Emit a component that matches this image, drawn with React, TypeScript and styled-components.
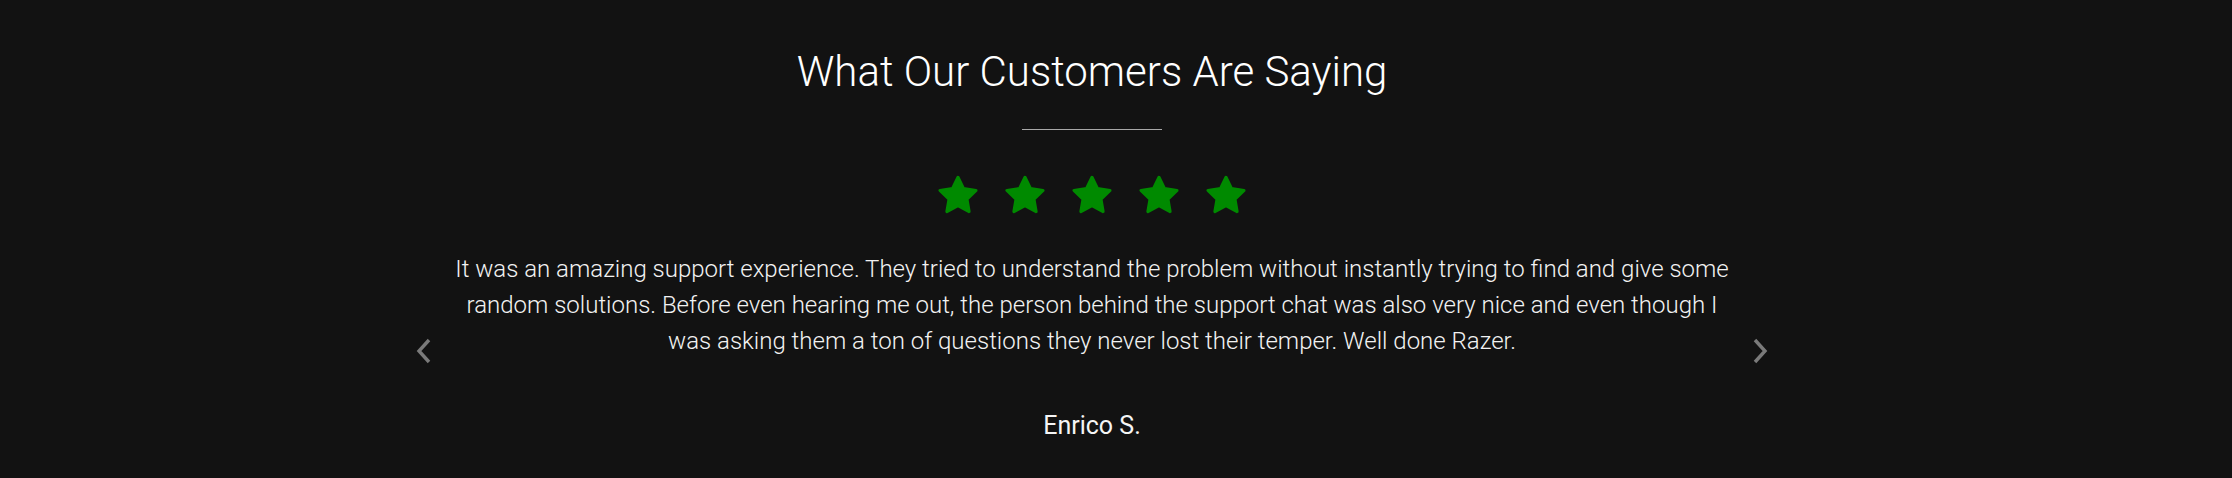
import React from "react";
import styled, { createGlobalStyle } from "styled-components";

const GlobalStyle = createGlobalStyle`
  html, body {
    margin: 0;
    padding: 0;
    background: #121212;
  }
  body {
    font-family: Roboto, "Noto Sans", sans-serif;
    color: #f2f2f2;
  }
`;

const Section = styled.section`
  display: flex;
  flex-direction: column;
  align-items: center;
  height: 478px;
  padding: 46px 48px 0 0;
  box-sizing: border-box;
`;

const Title = styled.h2`
  margin: 0;
  font-size: 42px;
  font-weight: 300;
  line-height: 52px;
  color: #ffffff;
`;

const Divider = styled.hr`
  width: 140px;
  height: 1px;
  margin: 31px 0 0;
  border: 0;
  background: #a8a8a8;
`;

const Stars = styled.div`
  display: flex;
  gap: 21px;
  margin-top: 43px;
`;

const Carousel = styled.div`
  display: flex;
  align-items: center;
  gap: 14px;
  margin-top: 33px;
`;

const ArrowButton = styled.button`
  display: flex;
  align-items: center;
  justify-content: center;
  width: 18px;
  height: 30px;
  padding: 0;
  border: 0;
  background: transparent;
  color: #7a7a7a;
  cursor: pointer;
`;

const Slide = styled.div`
  display: flex;
  flex-direction: column;
  align-items: center;
  width: 1290px;
  padding-bottom: 6px;
`;

const Quote = styled.p`
  margin: 0;
  font-size: 24px;
  font-weight: 300;
  line-height: 36px;
  text-align: center;
  color: #f2f2f2;
`;

const Author = styled.div`
  margin-top: 49px;
  font-size: 25px;
  font-weight: 400;
  line-height: 36px;
  color: #f5f5f5;
`;

function Star() {
  return (
    <svg width="46" height="45" viewBox="0 0 24 23.4">
      <path
        d="M12 2.2l2.9 5.9 6.5.95-4.7 4.6 1.1 6.45L12 17.05l-5.8 3.05 1.1-6.45-4.7-4.6 6.5-.95z"
        fill="#008a00"
        stroke="#008a00"
        strokeWidth="1.6"
        strokeLinejoin="round"
      />
    </svg>
  );
}

function Chevron({ dir }: { dir: "left" | "right" }) {
  const d = dir === "left" ? "M13 2L3 13l10 11" : "M3 2l10 11L3 24";
  return (
    <svg width="16" height="26" viewBox="0 0 16 26">
      <path d={d} fill="none" stroke="currentColor" strokeWidth="3.4" />
    </svg>
  );
}

export default function App() {
  return (
    <>
      <GlobalStyle />
      <Section>
        <Title>What Our Customers Are Saying</Title>
        <Divider />
        <Stars>
          {[0, 1, 2, 3, 4].map((i) => (
            <Star key={i} />
          ))}
        </Stars>
        <Carousel>
          <ArrowButton aria-label="Previous">
            <Chevron dir="left" />
          </ArrowButton>
          <Slide>
            <Quote>
              It was an amazing support experience. They tried to understand the
              problem without instantly trying to find and give some random
              solutions. Before even hearing me out, the person behind the support
              chat was also very nice and even though I was asking them a ton of
              questions they never lost their temper. Well done Razer.
            </Quote>
            <Author>Enrico S.</Author>
          </Slide>
          <ArrowButton aria-label="Next">
            <Chevron dir="right" />
          </ArrowButton>
        </Carousel>
      </Section>
    </>
  );
}
